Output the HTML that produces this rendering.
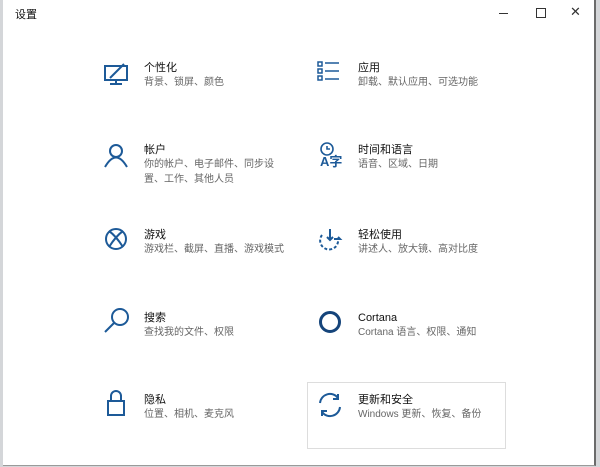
<!DOCTYPE html><html><head><meta charset="utf-8"><style>
body{margin:0;width:600px;height:467px;background:#d4d6d9;overflow:hidden;font-family:"Liberation Sans","Noto Sans CJK SC",sans-serif;position:relative}
.win{position:absolute;left:3px;top:0;width:591px;height:465px;background:#fff;border-right:2px solid #6b6b6b;border-bottom:1px solid #9a9a9a}
.t{position:absolute;font-size:11px;color:#111;line-height:14px}
.s{position:absolute;font-size:10px;color:#666;line-height:15px}
svg{position:absolute}
.ic{fill:none;stroke:#1d5a98;stroke-width:2}
</style></head><body><div class="win">
<div class="t" style="left:12px;top:8px;font-size:11px">设置</div>
<div style="position:absolute;left:496px;top:13px;width:9px;height:1px;background:#333"></div>
<div style="position:absolute;left:533px;top:8px;width:8px;height:8px;border:1px solid #333"></div>
<div class="t" style="left:567px;top:5px;font-size:13px;color:#333">✕</div>
<div style="position:absolute;left:304px;top:382px;width:197px;height:65px;border:1px solid #ddd"></div>
</div>
<svg width="600" height="467" class="ic">
<rect x="105" y="66" width="22" height="14"/><line x1="116" y1="80" x2="116" y2="84"/><line x1="110" y1="84" x2="122" y2="84"/>
<path d="M112 76 L124 64 M110 78 l3-3"/>
<circle cx="116" cy="151" r="6"/><path d="M105 167 Q116 148 127 167"/>
<circle cx="116" cy="239" r="10"/><path d="M109 231 Q116 236 123 247 M123 231 Q116 236 109 247"/>
<circle cx="120" cy="317" r="8"/><path d="M114 323 L105 332"/>
<rect x="108" y="401" width="16" height="14"/><path d="M111 401 v-5 a5 5 0 0 1 10 0 v5"/>
<path stroke-width="1.5" d="M318 62h4v4h-4z M318 69h4v4h-4z M318 76h4v4h-4z M325 63h14 M325 71h14 M325 79h14"/>
<circle cx="327" cy="149" r="6" stroke-width="1.6"/><path stroke-width="1.6" d="M327 146v3h3"/>
<path stroke-dasharray="3 2" d="M322 235 a9 9 0 1 0 16 4"/><path d="M330 229v11 M327 237l3 3 3-3 M334 239h6 l-2-2"/>
<circle cx="330" cy="322" r="9.5" stroke-width="3" stroke="#15447a"/>
<path d="M320 403 a10 10 0 0 1 18-5 M340 407 a10 10 0 0 1-18 5 M338 394v5h-5 M322 416v-5h5"/>
</svg>
<div class="t" style="left:320px;top:155px;font-size:13px;color:#1d5a98;font-weight:bold">A字</div>
<div class="t" style="left:144px;top:61px">个性化</div><div class="s" style="left:144px;top:75px">背景、锁屏、颜色</div>
<div class="t" style="left:144px;top:143px">帐户</div><div class="s" style="left:144px;top:157px;width:140px">你的帐户、电子邮件、同步设置、工作、其他人员</div>
<div class="t" style="left:144px;top:228px">游戏</div><div class="s" style="left:144px;top:242px">游戏栏、截屏、直播、游戏模式</div>
<div class="t" style="left:144px;top:311px">搜索</div><div class="s" style="left:144px;top:325px">查找我的文件、权限</div>
<div class="t" style="left:144px;top:393px">隐私</div><div class="s" style="left:144px;top:407px">位置、相机、麦克风</div>
<div class="t" style="left:358px;top:61px">应用</div><div class="s" style="left:358px;top:75px">卸载、默认应用、可选功能</div>
<div class="t" style="left:358px;top:143px">时间和语言</div><div class="s" style="left:358px;top:157px">语音、区域、日期</div>
<div class="t" style="left:358px;top:228px">轻松使用</div><div class="s" style="left:358px;top:242px">讲述人、放大镜、高对比度</div>
<div class="t" style="left:358px;top:311px">Cortana</div><div class="s" style="left:358px;top:325px">Cortana 语言、权限、通知</div>
<div class="t" style="left:358px;top:393px">更新和安全</div><div class="s" style="left:358px;top:407px">Windows 更新、恢复、备份</div>
</body></html>
